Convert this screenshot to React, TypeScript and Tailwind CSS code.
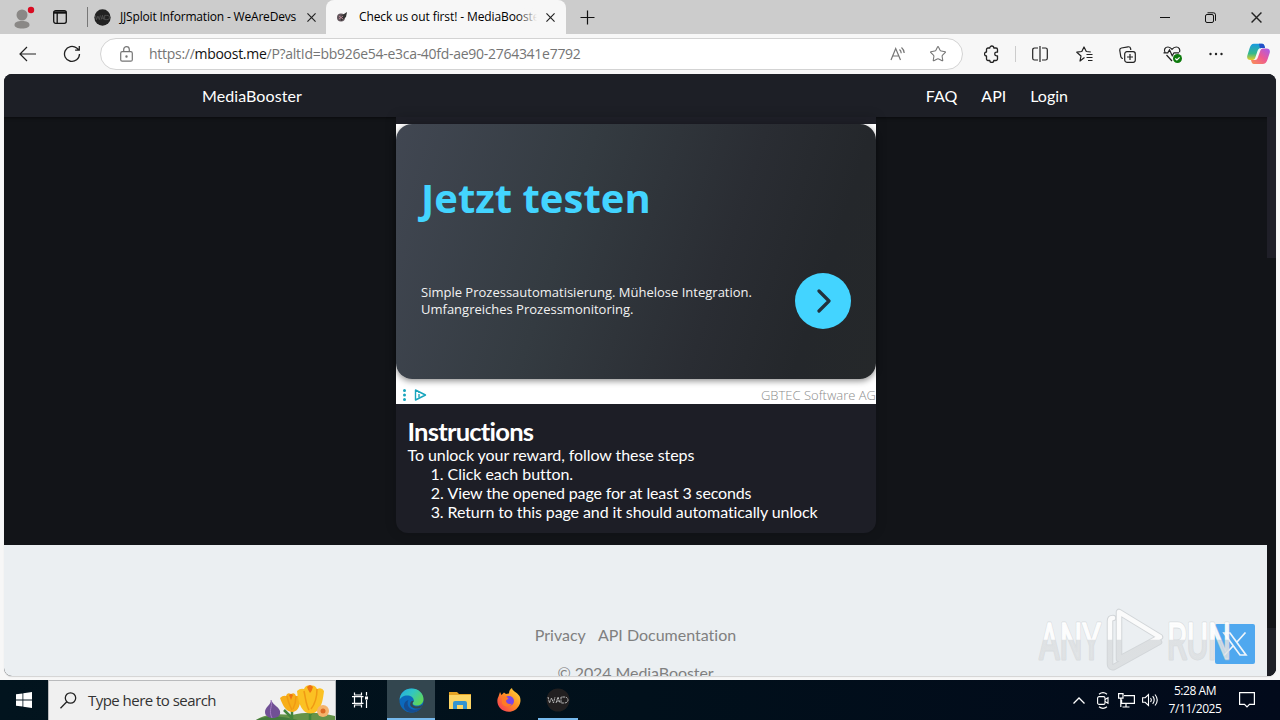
import React from 'react';
import { Star } from 'lucide-react';

const ui = "font-['Open_Sans','Noto_Sans',sans-serif]";

const CloseIcon: React.FC<{ size?: number }> = ({ size = 9 }) => (
  <svg width={size} height={size} viewBox="0 0 10 10" fill="none" stroke="#222" strokeWidth="1.3">
    <path d="M.5.5l9 9M9.5.5l-9 9" />
  </svg>
);

const DevsIcon: React.FC<{ size: number; dark?: boolean }> = ({ size, dark }) => (
  <svg width={size} height={size} viewBox="0 0 24 24">
    <circle cx="12" cy="12" r="11.5" fill={dark ? '#211f20' : '#222'} />
    <g fill="none" stroke={dark ? '#b5b5b5' : '#5c5c5c'} strokeWidth="1" strokeDasharray={dark ? '2.5 .7' : undefined}>
      <path d="M2 9l1.500 6 2-5 2 5 1.500-6M10 15l2-6 2 6M10.500 13h3M15 9v6h3c3 0 4-1.500 4-3s-1-3-4-3h-3" />
    </g>
  </svg>
);

const TabBar: React.FC = () => (
  <div className="flex h-[34px] bg-[#cccccc] text-[12px] text-black">
    <div className="flex w-[87px] items-center pl-[12px]">
      <svg className="-mt-px" width="24" height="24" viewBox="0 0 24 24">
        <circle cx="10" cy="10" r="5.500" fill="#8a8886" />
        <path d="M2.500 20c0-3 3-4 7.500-4s7.500 1 7.500 4c0 2-3 3.500-7.500 3.500S2.500 22 2.500 20z" fill="#8a8886" />
        <circle cx="19" cy="5" r="3.200" fill="#d90b22" />
      </svg>
      <svg className="ml-[17px]" width="14" height="14" viewBox="0 0 14 14" fill="none" stroke="#111" strokeWidth="1.300">
        <rect x=".7" y=".7" width="12.600" height="12.600" rx="2" />
        <path d="M.7 2.500h12.600" strokeWidth="2.400" />
        <path d="M4.200 3v10" />
      </svg>
    </div>
    <div className="flex w-[239px] items-center">
      <div className="h-5 w-px bg-[#777]" />
      <div className="ml-[6px] flex"><DevsIcon size={17} /></div>
      <span className="ml-[9px] w-[187px] whitespace-nowrap tracking-[-0.18px]">JJSploit Information - WeAreDevs</span>
      <CloseIcon />
    </div>
    <div className="flex w-[240px] items-center rounded-t-[8px] bg-[#f7f7f7] pl-[10px]">
      <svg width="12" height="12" viewBox="0 0 12 12">
        <circle cx="5" cy="6.500" r="4" fill="#62555c" />
        <path d="M5 5l6-4-1 5-5 4z" fill="#333" />
        <path d="M3 5l4 3M3 8l4-3" stroke="#bb8a96" />
      </svg>
      <div className="relative ml-[11px] w-[178px] overflow-hidden whitespace-nowrap tracking-[-0.1px]">
        Check us out first! - MediaBooster
        <div className="absolute top-0 right-0 h-full w-5 bg-linear-to-r from-[#f7f7f7]/0 to-[#f7f7f7]" />
      </div>
      <div className="ml-[9px]"><CloseIcon /></div>
    </div>
    <div className="flex flex-1 items-center pl-[14px]">
      <svg width="15" height="15" viewBox="0 0 15 15" stroke="#111" strokeWidth="1.200">
        <path d="M7.500.5v14M.5 7.500h14" />
      </svg>
    </div>
    <div className="flex w-[120px] items-center">
      <svg width="10" height="10" viewBox="0 0 10 10" stroke="#111"><path d="M0 5.500h10" /></svg>
      <svg className="ml-[35px]" width="11" height="11" viewBox="0 0 11 11" fill="none" stroke="#111">
        <rect x=".5" y="2.500" width="8" height="8" rx="1.500" />
        <path d="M2.500.8h6a2 2 0 0 1 2 2v6" />
      </svg>
      <div className="ml-[35px]"><CloseIcon size={11} /></div>
    </div>
  </div>
);

const CopilotIcon = () => (
  <svg width="23" height="22" viewBox="0 0 23 22">
    <defs>
      <linearGradient id="cpA" x1="0" y1="0" x2="0" y2="1">
        <stop offset="0" stopColor="#189ae2" />
        <stop offset=".6" stopColor="#36b98b" />
        <stop offset="1" stopColor="#e9ce27" />
      </linearGradient>
      <linearGradient id="cpB" x1="1" y1="0" x2="0" y2="1">
        <stop offset="0" stopColor="#a45cf1" />
        <stop offset=".5" stopColor="#ee5a91" />
        <stop offset="1" stopColor="#fa9253" />
      </linearGradient>
    </defs>
    <path d="M16 5.500c2 0 2 0 3.500 0 3 0 4 2 3 5l-2 6c-1 3-2.500 4.500-5 4.500H7c-2 0-2.500-2-3-4h4c2 0 2.500-1.500 3-3l2-5.500c.5-2 1.500-3 3-3z" fill="url(#cpB)" />
    <path d="M7 .8h8c2 0 2.500 2 3 4.200h-4c-2 0-3 1.500-3.500 3l-2 6c-.5 2-1.500 3-3 3H3.500c-3 0-4-2-3-5l2-6.500C3.500 2.500 4.500.8 7 .8z" fill="url(#cpA)" />
    <path d="M12 .8h3c2 0 2.500 2 3 4.200h-4l-1 .5z" fill="#2350c8" />
  </svg>
);

const Toolbar: React.FC = () => (
  <div className="flex h-[40px] items-center bg-[#f7f7f7] text-[#222]">
    <svg className="ml-[19px]" width="18" height="16" viewBox="0 0 18 16" fill="none" stroke="currentColor" strokeWidth="1.200">
      <path d="M8 1L1 8l7 7M1 8h16" />
    </svg>
    <svg className="ml-[26px]" width="18" height="18" viewBox="0 0 18 18" fill="none" stroke="currentColor" strokeWidth="1.300">
      <path d="M16.500 9a7.500 7.500 0 1 1-2.800-5.900l2.300 2M16.300 1v4.200h-4.200" />
    </svg>
    <div className="ml-[19px] flex h-[32px] w-[863px] items-center rounded-full border border-[#d3d3d3] bg-white text-[#757575]">
      <svg className="ml-[19px]" width="13" height="16" viewBox="0 0 13 16" fill="none" stroke="currentColor" strokeWidth="1.200">
        <rect x=".7" y="5.700" width="11.600" height="9.500" rx="1.500" />
        <path d="M3.700 5.500V3.400a2.800 2.800 0 0 1 5.600 0v2.100" />
        <circle cx="6.500" cy="10.500" r=".6" fill="currentColor" />
      </svg>
      <span className="ml-[16px] w-[741px] pb-px text-[14px] whitespace-nowrap tracking-[-0.28px]">
        https://<span className="text-[#111]">mboost.me</span>/P?altId=bb926e54-e3ca-40fd-ae90-2764341e7792
      </span>
      <svg width="17" height="16" viewBox="0 0 17 16" fill="none" stroke="currentColor" strokeWidth="1.200">
        <path d="M1 14L5.700 2.500 10.500 14M2.800 10h5.900M9.500 3.500c1.200 1 1.700 2.200 1.700 3.700M11.500 1.500c1.700 1.500 2.600 3.200 2.700 5.500" />
      </svg>
      <Star className="ml-[22px] shrink-0" size={18} strokeWidth={1.400} />
    </div>
    <svg className="ml-[21px]" width="16" height="18" viewBox="0 0 16 18" fill="none" stroke="currentColor" strokeWidth="1.300" strokeLinejoin="round">
      <path d="M4 3h1.800a2 2 0 0 1 4 0H12a1.500 1.500 0 0 1 1.500 1.500v2.700h-1a1.800 1.800 0 0 0 0 3.600h1v3.200A1.500 1.500 0 0 1 12 15.500H9.800a2 2 0 0 1-4 0H4A1.500 1.500 0 0 1 2.500 14v-3a2 2 0 0 1 0-4V4.500A1.500 1.500 0 0 1 4 3z" />
    </svg>
    <div className="ml-[15px] h-4 w-px bg-[#ccc]" />
    <svg className="ml-[16px]" width="16" height="16" viewBox="0 0 16 16" fill="none" stroke="currentColor" strokeWidth="1.200">
      <path d="M6 2H2.500C1.500 2 .7 2.800.7 3.800v8.400c0 1 .8 1.800 1.800 1.800H6M10 2h3.500c1 0 1.800.8 1.800 1.800v8.400c0 1-.8 1.800-1.800 1.800H10M8 0v16" />
    </svg>
    <svg className="ml-[28px]" width="17" height="17" viewBox="0 0 17 17" fill="none" stroke="currentColor" strokeWidth="1.200" strokeLinejoin="round">
      <path d="M8.500 11.500L4 15l1-5-4.200-3.800 5-.7L8 1l2.300 4.500 4.500.5M10.500 8.500h6M10.500 11.500h6M12 14.500h4.500" />
    </svg>
    <svg className="ml-[26px]" width="17" height="17" viewBox="0 0 17 17" fill="none" stroke="currentColor" strokeWidth="1.200">
      <rect x="5.700" y="5.700" width="10.600" height="10.600" rx="2.200" />
      <path d="M11 8v6M8 11h6M4 12.500c-1.200 0-2-.7-2.200-1.800L.8 4.500C.6 3 1.300 2.200 2.500 2L9 .8c1.400-.2 2.300.3 2.600 1.700l.2 1.500" />
    </svg>
    <svg className="ml-[27px]" width="20" height="19" viewBox="0 0 20 19" fill="none" stroke="currentColor" strokeWidth="1.200">
      <path d="M2 7.500C.5 4.500 2.200 2 5 2c2 0 3 1 4 2.300C10 3 11.500 2 13.300 2c2.700 0 4.200 2.500 3.200 5.200M3.500 10L9 16M.5 7.800h4.300l1.700-3 2.700 6 1.800-3H16" />
      <circle cx="14.500" cy="13.500" r="4.500" fill="#0e7a0d" stroke="none" />
      <path d="M12.300 13.500l1.600 1.500 2.700-2.700" stroke="#fff" />
    </svg>
    <svg className="ml-[26px]" width="14" height="4" viewBox="0 0 14 4" fill="currentColor">
      <circle cx="1.500" cy="2" r="1.200" /><circle cx="7" cy="2" r="1.200" /><circle cx="12.500" cy="2" r="1.200" />
    </svg>
    <div className="ml-[24px]"><CopilotIcon /></div>
  </div>
);

const AdCard: React.FC = () => (
  <div className="h-[280px] bg-white">
    <div className="flex h-[255px] flex-col rounded-[16px] bg-linear-[108deg,#414752_0%,#343b41_36%,#2a2d33_66%,#24272b_85%,#25282a_100%] px-[25px] shadow-[0_2px_6px_rgba(0,0,0,0.45)]">
      <h1 className="mt-[47px] font-['Open_Sans'] text-[40px] leading-[54px] font-bold text-[#43d4ff]">Jetzt testen</h1>
      <div className="mt-[48px] flex items-center justify-between">
        <p className="font-['Open_Sans'] text-[13px] leading-[17px] whitespace-nowrap text-[#f2f2f2]">
          Simple Prozessautomatisierung. Mühelose Integration.<br />Umfangreiches Prozessmonitoring.
        </p>
        <div className="flex size-[56px] items-center justify-center rounded-full bg-[#43d4ff]">
          <svg width="16" height="26" viewBox="0 0 16 26" fill="none" stroke="#22313c" strokeWidth="3.200" strokeLinecap="round" strokeLinejoin="round">
            <path d="M4 3l10 10L4 23" />
          </svg>
        </div>
      </div>
    </div>
    <div className="flex h-[25px] items-center pt-[8px] pl-[6px]">
      <svg className="-mt-px" width="26" height="14" viewBox="0 0 26 14" fill="none" stroke="#18a5bd" strokeWidth="1.400">
        <g fill="#18a5bd" stroke="none">
          <circle cx="2.500" cy="2.500" r="1.500" /><circle cx="2.500" cy="7" r="1.500" /><circle cx="2.500" cy="11.500" r="1.500" />
        </g>
        <path d="M13.500 2v10l10-5z" strokeLinejoin="round" />
        <path d="M17 6v3.500M17 4v1" />
      </svg>
      <span className="ml-auto font-['Open_Sans'] text-[13px] font-light whitespace-nowrap text-[#8c8c8c]">GBTEC Software AG</span>
    </div>
  </div>
);

const Watermark = () => (
  <svg width="200" height="66" viewBox="0 0 200 66">
    <defs>
      <linearGradient id="wm" x1="0" y1="0" x2="0" y2="66" gradientUnits="userSpaceOnUse">
        <stop offset=".49" stopColor="#fff" stopOpacity=".9" />
        <stop offset=".5" stopColor="#dfe2e4" stopOpacity=".8" />
      </linearGradient>
    </defs>
    <g fontFamily="Roboto" fontSize="50" strokeLinejoin="round">
      <g fill="none" stroke="#b9bdc0" strokeOpacity=".4" strokeWidth="3">
        <text x="4" y="51.500" textLength="62" lengthAdjust="spacingAndGlyphs">ANY</text>
        <text x="132" y="51.500" textLength="64" lengthAdjust="spacingAndGlyphs">RUN</text>
      </g>
      <g fill="url(#wm)" stroke="url(#wm)" strokeWidth="1.300">
        <text x="4" y="51.500" textLength="62" lengthAdjust="spacingAndGlyphs">ANY</text>
        <text x="132" y="51.500" textLength="64" lengthAdjust="spacingAndGlyphs">RUN</text>
      </g>
    </g>
    <g fill="none" strokeLinejoin="round" strokeLinecap="round">
      <path d="M75 57V14q0-3 3-3M84 5v47l41-22zM75 57q0 4 4 3l45-25" stroke="#b9bdc0" strokeOpacity=".5" strokeWidth="6.500" />
      <path d="M75 57V14q0-3 3-3M84 5v47l41-22zM75 57q0 4 4 3l45-25" stroke="url(#wm)" strokeWidth="4.500" />
    </g>
  </svg>
);

const Page: React.FC = () => (
  <div className="h-[606px] bg-[#f7f7f7] px-1 font-['Lato',sans-serif] text-[16px] [font-variant-ligatures:none]">
    <div className="relative flex h-[602px] flex-col overflow-hidden rounded-[8px] bg-[#121418] shadow-[0_1px_1px_rgba(0,0,0,0.15)]">
      <header className="flex h-[43px] items-center bg-[#1d1f26] pr-[208px] pb-px pl-[198px] text-white shadow-[0_1px_3px_rgba(0,0,0,0.5)]">
        <span className="pt-px tracking-[0.08px]">MediaBooster</span>
        <nav className="ml-auto flex gap-[24px] pt-px">
          <span>FAQ</span>
          <span>API</span>
          <span>Login</span>
        </nav>
      </header>
      <div className="flex flex-1">
        <div className="flex w-[1263px] flex-col">
          <main className="h-[428px] pl-[392px]">
            <section className="h-[416px] w-[480px] rounded-b-[12px] bg-[#1d1e26] pt-[7px] text-white shadow-[0_0_12px_rgba(0,0,0,0.18)]">
              <AdCard />
              <div className="pt-[11px] pl-[11.5px] leading-[19px]">
                <h2 className="h-[30px] text-[25.6px] leading-[32px] font-bold tracking-[-0.8px]">Instructions</h2>
                <p className="tracking-[-0.07px]">To unlock your reward, follow these steps</p>
                <ol className="list-decimal pl-[40px] tracking-[-0.1px]">
                  <li className="tracking-[-0.04px]">Click each button.</li>
                  <li className="tracking-[-0.14px]">View the opened page for at least 3 seconds</li>
                  <li>Return to this page and it should automatically unlock</li>
                </ol>
              </div>
            </section>
          </main>
          <footer className="h-[131px] overflow-hidden bg-[#ebeff2] pt-[80px] text-center leading-[19px] text-[#808080]">
            <div className="flex justify-center gap-[12px]">
              <span>Privacy</span>
              <span>API Documentation</span>
            </div>
            <p className="mt-[19px] tracking-[-0.08px]">© 2024 MediaBooster</p>
          </footer>
        </div>
        <div className="flex w-[9px] flex-col justify-between bg-[#121418]">
          <div className="h-[141px] bg-[#1f1f28]" />
          <div className="h-[48px] bg-[#1d1f26]" />
        </div>
      </div>
      <div className="absolute top-[550px] left-[1211px] z-10 flex size-[40px] items-center justify-center rounded-[2px] bg-[#4fa8ef]">
        <svg width="26" height="24" viewBox="0 0 26 24" fill="none" stroke="#eef5fb" strokeWidth="1.700">
          <path d="M2 1h6l16 22h-6zM23.500.5L14.500 10.500M11.500 13.500L2 23.500" />
        </svg>
      </div>
      <div className="absolute top-[533px] left-[1031px] z-20"><Watermark /></div>
    </div>
  </div>
);

const EdgeIcon = () => (
  <svg width="25" height="25" viewBox="0 0 25 25">
    <defs>
      <linearGradient id="edA" x1="0" y1="0" x2="1" y2=".6">
        <stop offset="0" stopColor="#24a8e5" />
        <stop offset=".5" stopColor="#32c6c1" />
        <stop offset="1" stopColor="#5fd65a" />
      </linearGradient>
    </defs>
    <circle cx="12.500" cy="12.500" r="12" fill="#0c69bc" />
    <path d="M.6 12C1 5 6 .5 12.500.5c7 0 12 5 12 10.500 0 4-2.500 6.500-6.500 6.500-3.500 0-5-1.500-4-3 .7-1 .8-1.500.7-2.500-.2-2.500-3-4.500-6.500-4.500C4.500 7.500 1.500 9.500.6 12z" fill="url(#edA)" />
    <path d="M9.500 12c-2 3.500-.5 8.500 4.500 9.500 3 .6 6-.4 8.500-2.500-2 4-6 5.700-10 5.500-5-.5-8-4-7.500-7.500.3-2.500 2-4.500 4.500-5z" fill="#154d91" />
    <path d="M13.500 15c-.5 2 1.500 3.500 4.500 3.500 2.200 0 4-.7 5.800-2l-1.300 2.500c-2.500 1.700-5.500 2-8 1-3-1-4-3-3-5.500.4-1 1.500-1.500 3.200-2 .1.900-.7 1.500-1.200 2.500z" fill="#34474f" />
  </svg>
);

const FolderIcon = () => (
  <svg width="22" height="19" viewBox="0 0 22 19">
    <path d="M0 1h8l2 2h12v3H0z" fill="#e5a323" />
    <path d="M0 4h22v14H0z" fill="#fcd565" />
    <path d="M4 18v-6q0-2 2-2h10q2 0 2 2v6h-4v-4H8v4z" fill="#3494d1" />
  </svg>
);

const FirefoxIcon = () => (
  <svg width="24" height="24" viewBox="0 0 24 24">
    <defs>
      <linearGradient id="ff" x1="1" y1="0" x2="0" y2="1">
        <stop offset="0" stopColor="#ffe33f" />
        <stop offset=".5" stopColor="#ff8a22" />
        <stop offset="1" stopColor="#f52d62" />
      </linearGradient>
    </defs>
    <path d="M3 4l1.500 3L7 4.500l2 1.500c1-.5 2-.7 3-.6C12 3 13 1 15 0c0 3 5 4 7.500 8 2.500 5 0 11-4.500 14S7 24.300 3 20C-.5 16 0 11 1.500 8.500z" fill="url(#ff)" />
    <circle cx="12" cy="13" r="5" fill="#7846e7" />
    <path d="M5 9c3-1 5 0 6.500 1.500L9 12.500c0 3 3 4.500 6 3-2 4-8 4-10 0z" fill="#ff7b26" />
  </svg>
);

const FlowersIcon = () => (
  <svg width="79" height="38" viewBox="0 0 79 38">
    <path d="M0 38c10-7 24-6 36-5 16-4 30-2 43 1v4z" fill="#659349" />
    <path d="M0 38c14-6 28-3 42 0z" fill="#437c3d" />
    <path d="M15 18c0 5-6 7-6 12 0 4 4 6 8 6s8-2 7-7c-1-4-6-5-9-11z" fill="#705095" />
    <path d="M15 18c2 7-3 10 1 18" stroke="#a27bc3" fill="none" />
    <path d="M36 38V26M54 38V20M36 36l-8-8M54 33l8-9" stroke="#43853b" strokeWidth="2.500" fill="none" />
    <path d="M24 16q3-3 6-2 1-4 5-2 4-2 5 2 4-1 5 2c-1 6-2 13-8 14-7 0-10-6-13-14z" fill="#f7ae1a" />
    <path d="M41 9q3-3 7-2 2-5 6-3 5-2 7 3 5-2 7 2c-1 8-2 15-6 19-4 5-11 4-14 1-4-4-6-11-7-20z" fill="#fbc123" />
    <path d="M48 9c2 9 2 14 5 19M61 7c0 8-2 15-6 20M31 14c1 6 3 10 5 14M40 14c0 6-1 9-3 13" stroke="#f09a14" strokeWidth="1.500" fill="none" />
    <path d="M51 5q3-4 6 0-1 4-3 6-2-3-3-6zM33 13q2-2 4 0l-2 5z" fill="#ee7412" />
    <circle cx="67" cy="29" r="6" fill="#f4b36c" /><circle cx="67" cy="29" r="2.500" fill="#dc6b24" />
  </svg>
);

const Taskbar: React.FC = () => (
  <div className="flex h-[40px] bg-linear-to-r from-[#02141e] via-[#01101b] to-[#020a1b] text-white">
    <div className="flex w-12 items-center justify-center">
      <svg width="16" height="16" viewBox="0 0 16 16" fill="#fff">
        <path d="M0 2.300L6.500 1.400V7.600H0zM7.300 1.300L16 0v7.600H7.300zM0 8.400h6.500v6.200L0 13.700zM7.300 8.400H16V16l-8.700-1.300z" />
      </svg>
    </div>
    <div className="flex w-[288px] items-center border border-b-0 border-[#b9babc] bg-[#f0f0f0] pl-[11px] text-[#333]">
      <svg width="17" height="17" viewBox="0 0 17 17" fill="none" stroke="#222" strokeWidth="1.300">
        <circle cx="10.500" cy="6" r="5.200" /><path d="M6.800 9.800L.5 16.200" />
      </svg>
      <span className="ml-[11px] text-[15px] whitespace-nowrap tracking-[-0.53px]">Type here to search</span>
      <div className="ml-auto flex"><FlowersIcon /></div>
    </div>
    <div className="flex w-[51px] items-center justify-center pr-[3px]">
      <svg width="16" height="16" viewBox="0 0 16 16" fill="none" stroke="#fff" strokeWidth="1.200">
        <path d="M2.500.6v2.400h7V.6M2.500 15.400V13h7v2.400M0 4.600h11.500M0 11.400h11.500M2.500 4.600v6.800M9.500 4.600v6.800M14.500 0v3.500M14.500 8v8" />
        <path d="M13 4.500h3v3h-3z" fill="#fff" stroke="none" />
      </svg>
    </div>
    <div className="flex w-12 items-center justify-center border-b-2 border-[#76b9ed] bg-[#33464f] pt-[2px]"><EdgeIcon /></div>
    <div className="flex w-[50px] items-center justify-center"><FolderIcon /></div>
    <div className="flex w-[48px] items-center justify-center"><FirefoxIcon /></div>
    <div className="ml-[5px] flex w-[40px] items-center justify-center border-b-2 border-[#76b9ed] pt-[2px]"><DevsIcon size={24} dark /></div>
    <div className="ml-auto flex items-center">
      <svg width="12" height="7" viewBox="0 0 12 7" fill="none" stroke="#fff" strokeWidth="1.300"><path d="M.5 6.500L6 1l5.500 5.500" /></svg>
      <svg className="ml-[12px]" width="12" height="17" viewBox="0 0 12 17" fill="none" stroke="#fff" strokeWidth="1.100">
        <rect x=".6" y="4.600" width="7.400" height="7.800" rx="1.500" />
        <path d="M8 7.500l3-1.700v5.500L8 9.600M2 2.200c2.500-2 5.500-2 8 0M2 14.800c2.500 2 5.500 2 8 0" />
      </svg>
      <svg className="ml-[9px]" width="17" height="15" viewBox="0 0 17 15" fill="none" stroke="#fff" strokeWidth="1.200">
        <path d="M6 2.600h10.400v7.800H3.600V6.500M8 10.500v3.500M4.500 14h7M.6.600H5v4.500H.6zM2.800 5v9" />
      </svg>
      <svg className="ml-[7px]" width="17" height="14" viewBox="0 0 17 14" fill="none" stroke="#fff" strokeWidth="1.100">
        <path d="M.6 4.700h2.600L6.500 1.500v11L3.200 9.300H.6zM8.500 5q1.600 2 0 4M10.700 3.200q3 3.800 0 7.600M13 1.500q4.500 5.500 0 11" />
      </svg>
      <div className="ml-[6px] w-[60px] text-center text-[12px] leading-[18px] whitespace-nowrap tracking-[-0.45px]">
        <div>5:28 AM</div>
        <div>7/11/2025</div>
      </div>
      <svg className="mr-[25px] ml-[14px]" width="16" height="16" viewBox="0 0 16 16" fill="none" stroke="#fff" strokeWidth="1.200">
        <path d="M.6.600h14.800v11.800h-4.900L8 15l-2.500-2.600H.6z" />
      </svg>
    </div>
  </div>
);

const App: React.FC = () => {
  return (
    <div className={`flex h-[720px] w-[1280px] flex-col overflow-hidden ${ui}`}>
      <TabBar />
      <Toolbar />
      <Page />
      <Taskbar />
    </div>
  );
};

export default App;
